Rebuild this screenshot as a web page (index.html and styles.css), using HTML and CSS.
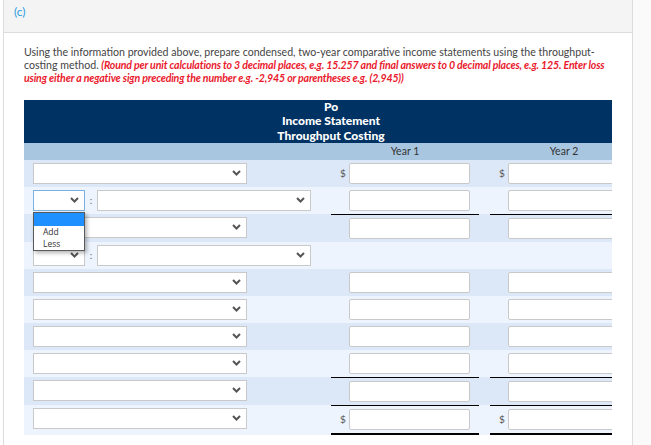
FILE: index.html
```html
<!DOCTYPE html>
<html>
<head>
<meta charset="utf-8">
<link rel="stylesheet" href="styles.css">
</head>
<body>
<div class="page">
  <div class="gutter"></div>
  <div class="panel">
    <div class="head">(c)</div>
    <div class="content">
      <p class="intro">Using the information provided above, prepare condensed, two-year comparative income statements using the throughput-<br>costing method. <em class="note">(Round per unit calculations to 3 decimal places, e.g. 15.257 and final answers to 0 decimal places, e.g. 125. Enter loss<br>using either a negative sign preceding the number e.g. -2,945 or parentheses e.g. (2,945))</em></p>
      <div class="sheet">
        <div class="title">Po<br>Income Statement<br>Throughput Costing</div>
        <div class="years"><span></span><span class="yl">Year 1</span><span class="yl">Year 2</span></div>

        <div class="row dark">
          <div class="label"><div class="sel"><svg class="chev" width="9" height="6" viewBox="0 0 9 6"><path d="M1 1l3.5 3.5L8 1" stroke="#555" stroke-width="2" fill="none"/></svg></div></div>
          <div class="amt"><span class="cur">$</span><div class="inp"></div></div>
          <div class="amt"><span class="cur">$</span><div class="inp"></div></div>
        </div>

        <div class="row light">
          <div class="label">
            <div class="sel sm focus"><svg class="chev" width="9" height="6" viewBox="0 0 9 6"><path d="M1 1l3.5 3.5L8 1" stroke="#555" stroke-width="2" fill="none"/></svg>
              <div class="dropdown">
                <div class="opt hi"></div>
                <div class="opt">Add</div>
                <div class="opt">Less</div>
              </div>
            </div>
            <span class="colon">:</span>
            <div class="sel"><svg class="chev" width="9" height="6" viewBox="0 0 9 6"><path d="M1 1l3.5 3.5L8 1" stroke="#555" stroke-width="2" fill="none"/></svg></div>
          </div>
          <div class="amt"><span class="cur"></span><div class="inp"></div></div>
          <div class="amt"><span class="cur"></span><div class="inp"></div></div>
        </div>

        <div class="row dark">
          <div class="label"><div class="sel"><svg class="chev" width="9" height="6" viewBox="0 0 9 6"><path d="M1 1l3.5 3.5L8 1" stroke="#555" stroke-width="2" fill="none"/></svg></div></div>
          <div class="amt top"><span class="cur"></span><div class="inp"></div></div>
          <div class="amt top"><span class="cur"></span><div class="inp"></div></div>
        </div>

        <div class="row light">
          <div class="label">
            <div class="sel sm"><svg class="chev" width="9" height="6" viewBox="0 0 9 6"><path d="M1 1l3.5 3.5L8 1" stroke="#555" stroke-width="2" fill="none"/></svg></div>
            <span class="colon">:</span>
            <div class="sel"><svg class="chev" width="9" height="6" viewBox="0 0 9 6"><path d="M1 1l3.5 3.5L8 1" stroke="#555" stroke-width="2" fill="none"/></svg></div>
          </div>
          <div class="amt"></div>
          <div class="amt"></div>
        </div>

        <div class="row dark">
          <div class="label"><div class="sel"><svg class="chev" width="9" height="6" viewBox="0 0 9 6"><path d="M1 1l3.5 3.5L8 1" stroke="#555" stroke-width="2" fill="none"/></svg></div></div>
          <div class="amt"><span class="cur"></span><div class="inp"></div></div>
          <div class="amt"><span class="cur"></span><div class="inp"></div></div>
        </div>

        <div class="row light">
          <div class="label"><div class="sel"><svg class="chev" width="9" height="6" viewBox="0 0 9 6"><path d="M1 1l3.5 3.5L8 1" stroke="#555" stroke-width="2" fill="none"/></svg></div></div>
          <div class="amt"><span class="cur"></span><div class="inp"></div></div>
          <div class="amt"><span class="cur"></span><div class="inp"></div></div>
        </div>

        <div class="row dark">
          <div class="label"><div class="sel"><svg class="chev" width="9" height="6" viewBox="0 0 9 6"><path d="M1 1l3.5 3.5L8 1" stroke="#555" stroke-width="2" fill="none"/></svg></div></div>
          <div class="amt"><span class="cur"></span><div class="inp"></div></div>
          <div class="amt"><span class="cur"></span><div class="inp"></div></div>
        </div>

        <div class="row light">
          <div class="label"><div class="sel"><svg class="chev" width="9" height="6" viewBox="0 0 9 6"><path d="M1 1l3.5 3.5L8 1" stroke="#555" stroke-width="2" fill="none"/></svg></div></div>
          <div class="amt"><span class="cur"></span><div class="inp"></div></div>
          <div class="amt"><span class="cur"></span><div class="inp"></div></div>
        </div>

        <div class="row dark">
          <div class="label"><div class="sel"><svg class="chev" width="9" height="6" viewBox="0 0 9 6"><path d="M1 1l3.5 3.5L8 1" stroke="#555" stroke-width="2" fill="none"/></svg></div></div>
          <div class="amt top"><span class="cur"></span><div class="inp"></div></div>
          <div class="amt top"><span class="cur"></span><div class="inp"></div></div>
        </div>

        <div class="row light">
          <div class="label"><div class="sel"><svg class="chev" width="9" height="6" viewBox="0 0 9 6"><path d="M1 1l3.5 3.5L8 1" stroke="#555" stroke-width="2" fill="none"/></svg></div></div>
          <div class="amt top bottom"><span class="cur">$</span><div class="inp"></div></div>
          <div class="amt top bottom"><span class="cur">$</span><div class="inp"></div></div>
        </div>
      </div>
    </div>
  </div>
  <div class="side"></div>
</div>
</body>
</html>
```
FILE: styles.css
```css
html, body {
  margin: 0;
  padding: 0;
  background: #fff;
}
body {
  font-family: Lato, "Open Sans", sans-serif;
  color: #444;
}
.page {
  display: flex;
  min-height: 445px;
}
.gutter {
  width: 3px;
  flex: none;
  background: #fff;
}
.panel {
  width: 628px;
  flex: none;
  border-left: 1px solid #dcdcdc;
  border-right: 1px solid #dcdcdc;
  background: #fff;
}
.side {
  flex: 1;
  background: #fafafa;
}
.head {
  height: 32px;
  background: #f4f4f4;
  border-bottom: 1px solid #dcdcdc;
  padding-left: 10px;
  color: #2a9ee0;
  font-size: 12px;
  line-height: 24px;
}
.content {
  padding: 0 20px;
}
.intro {
  margin: 0;
  padding-top: 13px;
  font-size: 10.6px;
  line-height: 13px;
  color: #444;
  white-space: nowrap;
}
.note {
  color: #ea1a2d;
  font-weight: bold;
  font-style: italic;
  letter-spacing: -0.17px;
}
.sheet {
  margin-top: 15px;
  width: 588px;
  overflow: hidden;
}
.title {
  width: 614px;
  background: #003263;
  color: #fff;
  font-weight: 900;
  text-align: center;
  font-size: 12px;
  line-height: 14.3px;
}
.years, .row {
  display: grid;
  grid-template-columns: 296px 148px 148px;
  column-gap: 11px;
  width: 614px;
}
.years {
  background: #a8c6e0;
  height: 17px;
  font-size: 10.5px;
  line-height: 17px;
  color: #333;
}
.yl {
  text-align: center;
}
.row.dark {
  background: #dce8f7;
}
.row.light {
  background: #edf4fd;
}
.label {
  padding: 3px 0 3px 9px;
  display: flex;
  align-items: flex-start;
}
.sel {
  position: relative;
  width: 214px;
  height: 21px;
  box-sizing: border-box;
  border: 1px solid #c9c9c9;
  background: #fff;
  display: flex;
  justify-content: flex-end;
  align-items: center;
  padding-right: 5px;
}
.sel.sm {
  width: 52px;
}
.sel.focus {
  border-color: #7db0e2;
}
.chev {
  display: block;
}
.colon {
  width: 12px;
  text-align: center;
  font-size: 10px;
  line-height: 21px;
  color: #666;
}
.dropdown {
  position: absolute;
  left: -1px;
  top: 21px;
  width: 52px;
  box-sizing: border-box;
  border: 1px solid #5a5a5a;
  background: #fff;
  box-shadow: 2px 2px 4px rgba(0, 0, 0, 0.3);
  z-index: 2;
}
.opt {
  height: 12px;
  line-height: 12px;
  font-family: "Open Sans", sans-serif;
  font-size: 8.5px;
  color: #333;
  padding-left: 9px;
}
.opt.hi {
  background: #1e90ff;
  height: 13px;
}
.amt {
  padding: 3px 9px 3px 0;
  display: flex;
  align-items: flex-start;
}
.amt.top {
  border-top: 1px solid #000;
}
.amt.bottom {
  border-bottom: 2px solid #000;
}
.cur {
  width: 18px;
  padding-left: 9px;
  box-sizing: border-box;
  font-size: 10px;
  line-height: 21px;
  color: #555;
}
.inp {
  width: 121px;
  height: 21px;
  box-sizing: border-box;
  border: 1px solid #c9c9c9;
  border-radius: 2px;
  background: #fff;
}
```
